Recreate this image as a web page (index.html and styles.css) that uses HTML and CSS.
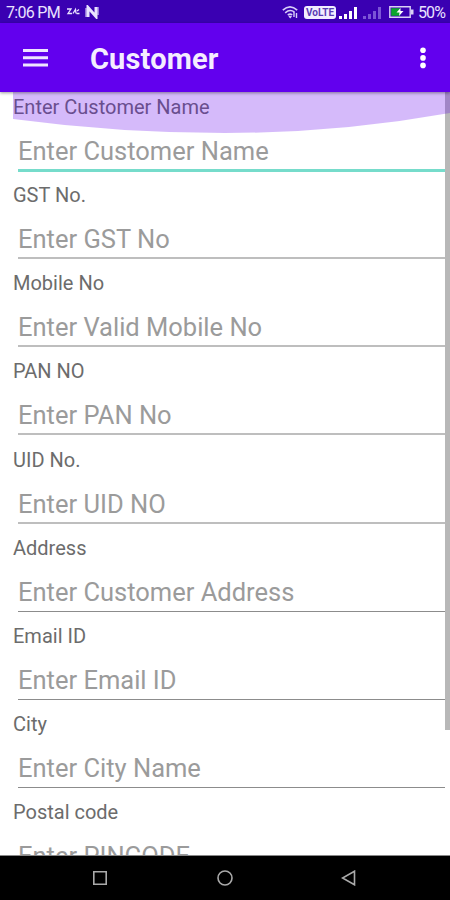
FILE: index.html
```html
<!DOCTYPE html>
<html lang="en">
<head>
<meta charset="utf-8">
<title>Customer</title>
<link rel="stylesheet" href="styles.css">
</head>
<body>
<div class="screen">
  <header class="status">
    <span class="time">7:06 PM</span>
    <svg class="notices" width="36" height="14" viewBox="0 0 36 14" fill="none" stroke="#e9e2ff">
      <path d="M1 4h4L2 8.500h4M7 8.500l2.500-4 .5 4M10.500 8.500h3M11 6l2-1.500" stroke-width="1.300"/>
      <path d="M22 12V2.500l8 9V2" stroke-width="3"/><path d="M20 3v9M32 2v8" stroke-width="1"/>
    </svg>
    <div class="signals">
      <svg width="17" height="15" viewBox="0 0 17 15" fill="none" stroke="#d8cdf8" stroke-width="1.600">
        <path d="M.8 5.200Q8 -1.500 15.200 5.200M3.200 7.800Q8 3.600 12.500 7.200M5.800 10.200Q8 8.200 10.200 10"/>
        <path d="M7 11l1.200 1.500L9.400 11M12 7v5M14.500 8v5" stroke-width="1.400"/>
      </svg>
      <span class="volte">VoLTE</span>
      <svg width="19" height="13" viewBox="0 0 19 13" fill="#fff"><path d="M0 10h3v3H0zM5 8h3v5H5zM10 5h3v8h-3zM15 1h3v12h-3z"/></svg>
      <svg class="dim" width="19" height="13" viewBox="0 0 19 13" fill="#7c55d6"><path d="M0 10h3v3H0zM5 8h3v5H5zM10 5h3v8h-3zM15 1h3v12h-3z"/></svg>
      <svg class="battery" width="25" height="12" viewBox="0 0 25 12">
        <path d="M.8.8h20.400v10.400H.8z" fill="none" stroke="#d9d0f5" stroke-width="1.400"/>
        <path d="M2.200 2.200h9v7.600h-9z" fill="#0aa52c"/><path d="M22 3.500h2.500v5H22z" fill="#d9d0f5"/>
        <path d="M11.500 2L7.500 6.500h3L10 10l4.500-5h-3z" fill="#fff"/>
      </svg>
      <span class="percent">50%</span>
    </div>
  </header>
  <div class="appbar">
    <svg width="25" height="18" viewBox="0 0 25 18" fill="#eee4ff"><path d="M0 0h25v3H0zM0 7.300h25v3H0zM0 14.600h25v3H0z"/></svg>
    <h1>Customer</h1>
    <svg class="more" width="6" height="22" viewBox="0 0 6 22" fill="#fff"><circle cx="3" cy="3.300" r="2.800"/><circle cx="3" cy="10.900" r="2.800"/><circle cx="3" cy="18.400" r="2.800"/></svg>
  </div>
  <main class="content">
    <svg class="glow" width="437" height="42" viewBox="0 0 437 42"><path d="M0 0H437V21Q325 41 212 41Q105 41 0 27Z" fill="#6200ee" fill-opacity=".27"/></svg>
    <form>
      <div class="field active"><label>Enter Customer Name</label><div class="input">Enter Customer Name</div></div>
      <div class="field"><label>GST No.</label><div class="input">Enter GST No</div></div>
      <div class="field"><label>Mobile No</label><div class="input">Enter Valid Mobile No</div></div>
      <div class="field"><label>PAN NO</label><div class="input">Enter PAN No</div></div>
      <div class="field"><label>UID No.</label><div class="input">Enter UID NO</div></div>
      <div class="field thin"><label>Address</label><div class="input">Enter Customer Address</div></div>
      <div class="field thin"><label>Email ID</label><div class="input">Enter Email ID</div></div>
      <div class="field thin"><label>City</label><div class="input">Enter City Name</div></div>
      <div class="field"><label>Postal code</label><div class="input">Enter PINCODE</div></div>
    </form>
    <div class="scrollbar"></div>
  </main>
  <nav class="navbar">
    <svg width="16" height="16" viewBox="0 0 16 16"><path d="M1.800 1.800h12.400v12.400H1.800z"/></svg>
    <svg width="16" height="16" viewBox="0 0 16 16"><circle cx="8" cy="8" r="7"/></svg>
    <svg width="16" height="16" viewBox="0 0 16 16"><path d="M13.500 1.200v13.600L1.500 8z"/></svg>
  </nav>
</div>
</body>
</html>
```

FILE: styles.css
```css
* { box-sizing: border-box; }
body { margin: 0; font-family: Roboto, "Liberation Sans", sans-serif; background: #fff; }
svg { display: block; flex: none; }
.screen { width: 450px; height: 900px; display: flex; flex-direction: column; overflow: hidden; }
.status { flex: none; height: 23px; background: #3a00b2; color: #e9e2ff; display: flex; align-items: center; padding: 1px 4px 0 6px; font-size: 16px; }
.time { width: 54px; white-space: nowrap; letter-spacing: -.7px; }
.notices { margin-left: 6px; }
.signals { margin-left: auto; display: flex; align-items: center; }
.volte { width: 32px; height: 13px; margin: 0 3px 0 5px; border-radius: 3px; background: #f2edff; color: #5a3bb4; font-size: 10px; font-weight: 700; line-height: 13px; text-align: center; }
.dim { margin-left: 5px; }
.battery { margin: 0 4px 0 7px; }
.percent { width: 28px; letter-spacing: -.9px; }
.appbar { flex: none; position: relative; z-index: 2; height: 69px; background: #6200ee; display: flex; align-items: center; padding: 0 24px 0 23px; box-shadow: 0 1px 3px rgba(0, 0, 0, .4); }
.appbar h1 { margin: 3px 0 0 42px; font-size: 29px; line-height: 34px; font-weight: 700; letter-spacing: .15px; color: #f4edff; }
.more { margin-left: auto; }
.content { position: relative; flex: none; height: 764px; overflow: hidden; border-bottom: 1px solid #888; }
.glow { position: absolute; left: 13px; top: 0; z-index: 1; }
.scrollbar { position: absolute; right: 0; top: 0; width: 5px; height: 638px; background: rgba(0, 0, 0, .28); }
form { padding: 0 5px 0 13px; }
.field { height: 88.16px; }
.field label { display: block; height: 31px; line-height: 31px; font-size: 20px; color: #6c6c6c; }
.input { height: 48px; margin-left: 5px; padding-top: 11px; font-size: 25.5px; line-height: 34px; color: #9b9b9b; border-bottom: 2px solid #bebebe; white-space: nowrap; }
.thin .input { border-bottom: 1px solid #8c8c8c; }
.active .input { height: 49px; border-bottom: 3px solid #76dccb; }
.navbar { flex: none; height: 44px; background: #000; display: flex; justify-content: space-between; align-items: center; padding: 0 93px 0 92px; }
.navbar svg { fill: none; stroke: #aaa; stroke-width: 1.600; }
```
